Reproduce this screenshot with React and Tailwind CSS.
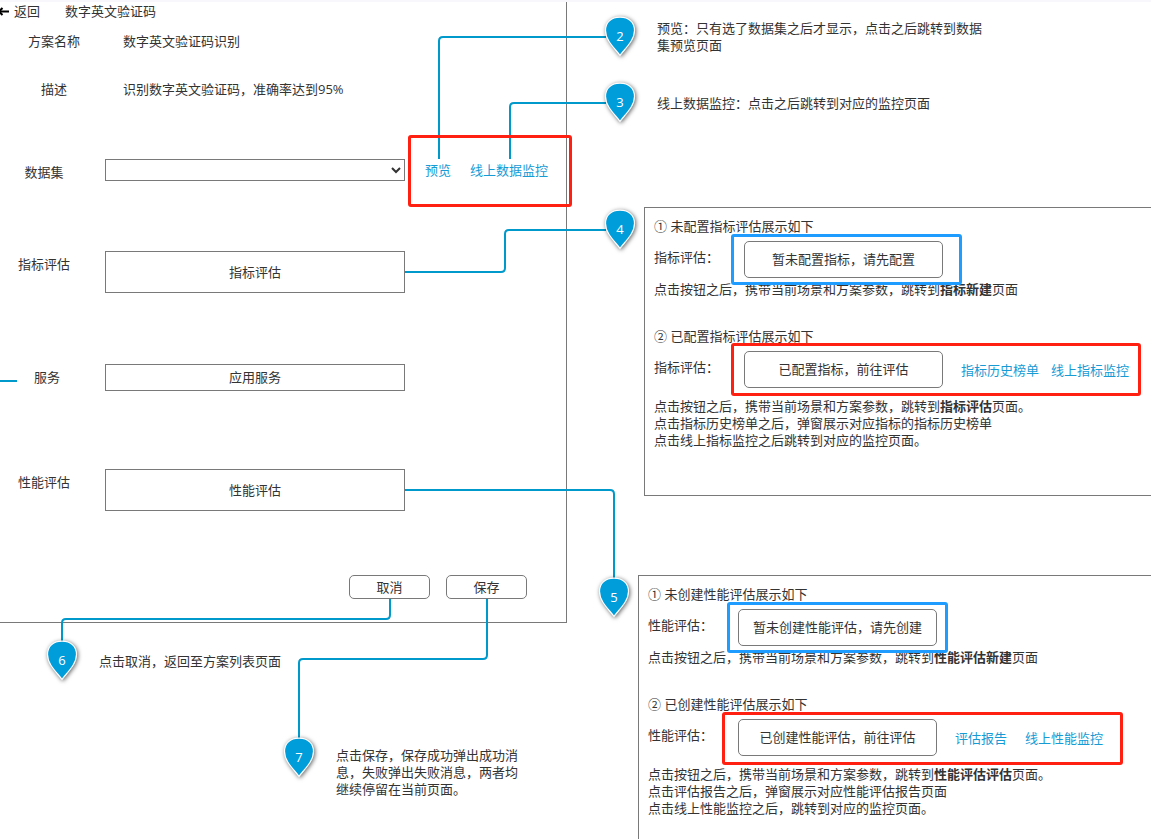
const LINE = '#0099cb';

const pins = [
  { n: 2, place: 'left-[600px] top-[12px]' },
  { n: 3, place: 'left-[600px] top-[78px]' },
  { n: 4, place: 'left-[600px] top-[205px]' },
  { n: 5, place: 'left-[594px] top-[573px]' },
  { n: 6, place: 'left-[42px] top-[636px]' },
  { n: 7, place: 'left-[279px] top-[733px]' },
];

const connectors = [
  'M439 159V41Q439 37 443 37H606',
  'M510 159V107Q510 103 514 103H606',
  'M405 272H501Q505 272 505 268V234Q505 230 509 230H606',
  'M405 490H610Q614 490 614 494V579',
  'M390 599V615Q390 619 386 619H66Q62 619 62 623V642',
  'M487 599V655Q487 659 483 659H303Q299 659 299 663V739',
  'M0 381H17',
];

const frames = [
  'left-[408px] top-[135px] w-[164px] h-[72px] border-[#ff2012]',
  'left-[731px] top-[234px] w-[231px] h-[51px] border-[#1e9cff]',
  'left-[731px] top-[343px] w-[410px] h-[53px] border-[#ff2012]',
  'left-[727px] top-[602px] w-[221px] h-[51px] border-[#1e9cff]',
  'left-[722px] top-[712px] w-[401px] h-[53px] border-[#ff2012]',
];

function Pin({ n, place }) {
  return (
    <div className={`absolute h-[50px] w-10 ${place}`}>
      <svg className="block h-[50px] w-10 overflow-visible" viewBox="0 0 40 50" aria-hidden="true">
        <path
          d="M20 43.500C16 37.500 5.500 29 5.500 18.500C5.500 10.500 11 5.200 20 5.200C29 5.200 34.500 10.500 34.500 18.500C34.500 29 24 37.500 20 43.500Z"
          fill="#009ddb"
          stroke="#fff"
          strokeWidth="1.200"
          className="drop-shadow-[1px_1px_2px_rgba(0,0,0,0.6)]"
        />
      </svg>
      <span className="absolute inset-x-0 top-4 text-center font-['Open_Sans',sans-serif] text-[13px] font-medium leading-[17px] text-white">{n}</span>
    </div>
  );
}

function Annotations() {
  return (
    <div className="pointer-events-none absolute inset-0">
      <svg className="absolute left-0 top-0 h-[839px] w-[660px]" viewBox="0 0 660 839" fill="none" stroke={LINE} strokeWidth="2" aria-hidden="true">
        {connectors.map((d) => (
          <path key={d} d={d} />
        ))}
      </svg>
      {frames.map((f) => (
        <div key={f} className={`absolute rounded-[3px] border-3 ${f}`} />
      ))}
      {pins.map((p) => (
        <Pin key={p.n} {...p} />
      ))}
    </div>
  );
}

function Link({ children }) {
  return (
    <a href="#" className="whitespace-nowrap text-[#169bd5]">
      {children}
    </a>
  );
}

function StateRow({ label, button, children }) {
  return (
    <div className="mt-1.5 flex items-start">
      <span className="w-[90px] shrink-0 pt-2">{label}</span>
      <button type="button" className="h-[37px] w-[199px] shrink-0 rounded-[5px] border border-[#797979] bg-white">
        {button}
      </button>
      {children}
    </div>
  );
}

const boxClass = 'w-[300px] border border-[#797979] bg-white';

function SchemeForm() {
  return (
    <form className="border-b border-r border-[#797979] pb-[23px]" onSubmit={(e) => e.preventDefault()}>
      <header className="flex h-[19px] items-center">
        <a href="#" className="flex w-[65px] items-center gap-[5px]">
          <svg className="h-[11px] w-[9px]" viewBox="0 0 9 11" aria-hidden="true">
            <path d="M0 4.500H9V6.500H0Z" fill="#000" />
            <path d="M-1 5.500L2.500 2M-1 5.500L2.500 9" stroke="#000" strokeWidth="2" fill="none" />
          </svg>
          返回
        </a>
        <h1>数字英文验证码</h1>
      </header>

      <dl>
        <div className="mt-3 flex">
          <dt className="w-[108px] text-center">方案名称</dt>
          <dd className="pl-[15px]">数字英文验证码识别</dd>
        </div>
        <div className="mt-[31px] flex">
          <dt className="w-[108px] text-center">描述</dt>
          <dd className="pl-[15px]">识别数字英文验证码，准确率达到95%</dd>
        </div>
      </dl>

      <div className="mt-[61px] flex items-start">
        <label htmlFor="dataset" className="w-[88px] pt-[5px] text-center">数据集</label>
        <select id="dataset" className={`ml-[17px] h-[22px] ${boxClass}`}>
          <option></option>
        </select>
        <div className="ml-5 flex gap-[19px] pt-[3px]">
          <Link>预览</Link>
          <Link>线上数据监控</Link>
        </div>
      </div>
      <div className="mt-[70px] flex items-start">
        <span className="w-[88px] pt-[5px] text-center">指标评估</span>
        <button type="button" className={`ml-[17px] h-[42px] ${boxClass}`}>指标评估</button>
      </div>
      <div className="mt-[71px] flex items-start">
        <span className="w-[94px] pt-[5px] text-center">服务</span>
        <button type="button" className={`ml-[11px] h-[27px] ${boxClass}`}>应用服务</button>
      </div>
      <div className="mt-[78px] flex items-start">
        <span className="w-[88px] pt-[5px] text-center">性能评估</span>
        <button type="button" className={`ml-[17px] h-[42px] ${boxClass}`}>性能评估</button>
      </div>

      <div className="mt-16 flex justify-end gap-4 pr-[39px]">
        <button type="button" className="h-6 w-[81px] rounded-[5px] border border-[#797979] bg-white">取消</button>
        <button type="submit" className="h-6 w-[81px] rounded-[5px] border border-[#797979] bg-white">保存</button>
      </div>
    </form>
  );
}

export default function App() {
  return (
    <div className="relative min-h-screen overflow-hidden border-t-2 border-[#f7f7fc] bg-white font-['Open_Sans','Noto_Sans_CJK_SC',sans-serif] text-[13px] leading-[17px] text-[#333]" lang="zh-CN">
      <div className="flex">
        <div className="w-[567px] shrink-0">
          <SchemeForm />
          <p className="mt-[30px] pl-[99px]">点击取消，返回至方案列表页面</p>
          <p className="ml-[336px] mt-[77px] w-[184px]">点击保存，保存成功弹出成功消息，失败弹出失败消息，两者均继续停留在当前页面。</p>
        </div>

        <div className="min-w-0 flex-1">
          <div className="pl-[90px] pt-[18px]">
            <p className="w-[326px]">预览：只有选了数据集之后才显示，点击之后跳转到数据集预览页面</p>
            <p className="mt-[41px]">线上数据监控：点击之后跳转到对应的监控页面</p>
          </div>

          <section className="ml-[77px] mt-[95px] h-[289px] whitespace-nowrap border-y border-l border-[#797979] pl-[9px] pt-2.5">
            <h2>① 未配置指标评估展示如下</h2>
            <StateRow label="指标评估：" button="暂未配置指标，请先配置" />
            <p className="mt-[3px]">点击按钮之后，携带当前场景和方案参数，跳转到<b>指标新建</b>页面</p>
            <h2 className="mt-[30px]">② 已配置指标评估展示如下</h2>
            <StateRow label="指标评估：" button="已配置指标，前往评估">
              <div className="ml-[18px] flex gap-3 pt-[11px]">
                <Link>指标历史榜单</Link>
                <Link>线上指标监控</Link>
              </div>
            </StateRow>
            <p className="mt-2.5">点击按钮之后，携带当前场景和方案参数，跳转到<b>指标评估</b>页面。</p>
            <p>点击指标历史榜单之后，弹窗展示对应指标的指标历史榜单</p>
            <p>点击线上指标监控之后跳转到对应的监控页面。</p>
          </section>

          <section className="ml-[71px] mt-[79px] whitespace-nowrap border-l border-t border-[#797979] pb-[22px] pl-[9px] pt-2.5">
            <h2>① 未创建性能评估展示如下</h2>
            <StateRow label="性能评估：" button="暂未创建性能评估，请先创建" />
            <p className="mt-[3px]">点击按钮之后，携带当前场景和方案参数，跳转到<b>性能评估新建</b>页面</p>
            <h2 className="mt-[30px]">② 已创建性能评估展示如下</h2>
            <StateRow label="性能评估：" button="已创建性能评估，前往评估">
              <div className="ml-[18px] flex gap-[18px] pt-[11px]">
                <Link>评估报告</Link>
                <Link>线上性能监控</Link>
              </div>
            </StateRow>
            <p className="mt-2.5">点击按钮之后，携带当前场景和方案参数，跳转到<b>性能评估评估</b>页面。</p>
            <p>点击评估报告之后，弹窗展示对应性能评估报告页面</p>
            <p>点击线上性能监控之后，跳转到对应的监控页面。</p>
          </section>
        </div>
      </div>
      <div className="absolute inset-x-0 -top-0.5 bottom-0">
        <Annotations />
      </div>
    </div>
  );
}
